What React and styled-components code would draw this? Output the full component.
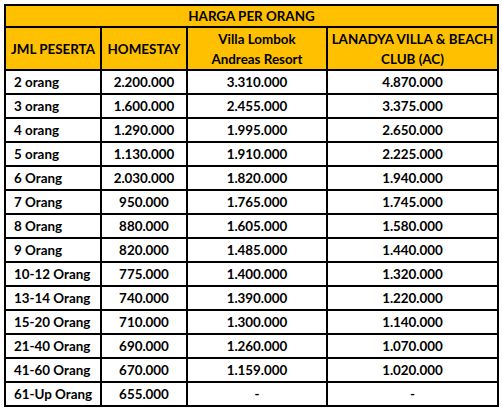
import React from "react";
import styled, { createGlobalStyle } from "styled-components";

const GlobalStyle = createGlobalStyle`
  body {
    margin: 0;
    background: #fff;
    font-family: Lato, "Open Sans", sans-serif;
  }
`;

const Wrap = styled.div`
  padding: 4px 0 0 4px;
`;

const Table = styled.table`
  border-collapse: collapse;
  table-layout: fixed;
  width: 493px;
  color: #000;
  font-size: 13.4px;
  font-weight: 700;

  td,
  th {
    border: 2px solid #000;
    padding: 0;
  }
`;

const Head = styled.th`
  background: #ffc000;
  font-weight: 700;
  text-align: center;
  line-height: 20px;
  height: ${(p) => p.$h}px;
`;

const Cell = styled.td`
  height: 22px;
  text-align: ${(p) => (p.$left ? "left" : "center")};
  padding-left: ${(p) => (p.$left ? "8px" : "0")} !important;
`;

const rows = [
  ["2 orang", "2.200.000", "3.310.000", "4.870.000"],
  ["3 orang", "1.600.000", "2.455.000", "3.375.000"],
  ["4 orang", "1.290.000", "1.995.000", "2.650.000"],
  ["5 orang", "1.130.000", "1.910.000", "2.225.000"],
  ["6 Orang", "2.030.000", "1.820.000", "1.940.000"],
  ["7 Orang", "950.000", "1.765.000", "1.745.000"],
  ["8 Orang", "880.000", "1.605.000", "1.580.000"],
  ["9 Orang", "820.000", "1.485.000", "1.440.000"],
  ["10-12 Orang", "775.000", "1.400.000", "1.320.000"],
  ["13-14 Orang", "740.000", "1.390.000", "1.220.000"],
  ["15-20 Orang", "710.000", "1.300.000", "1.140.000"],
  ["21-40 Orang", "690.000", "1.260.000", "1.070.000"],
  ["41-60 Orang", "670.000", "1.159.000", "1.020.000"],
  ["61-Up Orang", "655.000", "-", "-"],
];

export default function App() {
  return (
    <Wrap>
      <GlobalStyle />
      <Table>
        <colgroup>
          <col style={{ width: 96 }} />
          <col style={{ width: 86 }} />
          <col style={{ width: 140 }} />
          <col style={{ width: 171 }} />
        </colgroup>
        <thead>
          <tr>
            <Head colSpan={4} $h={19}>
              HARGA PER ORANG
            </Head>
          </tr>
          <tr>
            <Head $h={41}>JML PESERTA</Head>
            <Head $h={41}>HOMESTAY</Head>
            <Head $h={41}>
              Villa Lombok
              <br />
              Andreas Resort
            </Head>
            <Head $h={41}>
              LANADYA VILLA &amp; BEACH
              <br />
              CLUB (AC)
            </Head>
          </tr>
        </thead>
        <tbody>
          {rows.map((r) => (
            <tr key={r[0]}>
              <Cell $left>{r[0]}</Cell>
              <Cell>{r[1]}</Cell>
              <Cell>{r[2]}</Cell>
              <Cell>{r[3]}</Cell>
            </tr>
          ))}
        </tbody>
      </Table>
    </Wrap>
  );
}
